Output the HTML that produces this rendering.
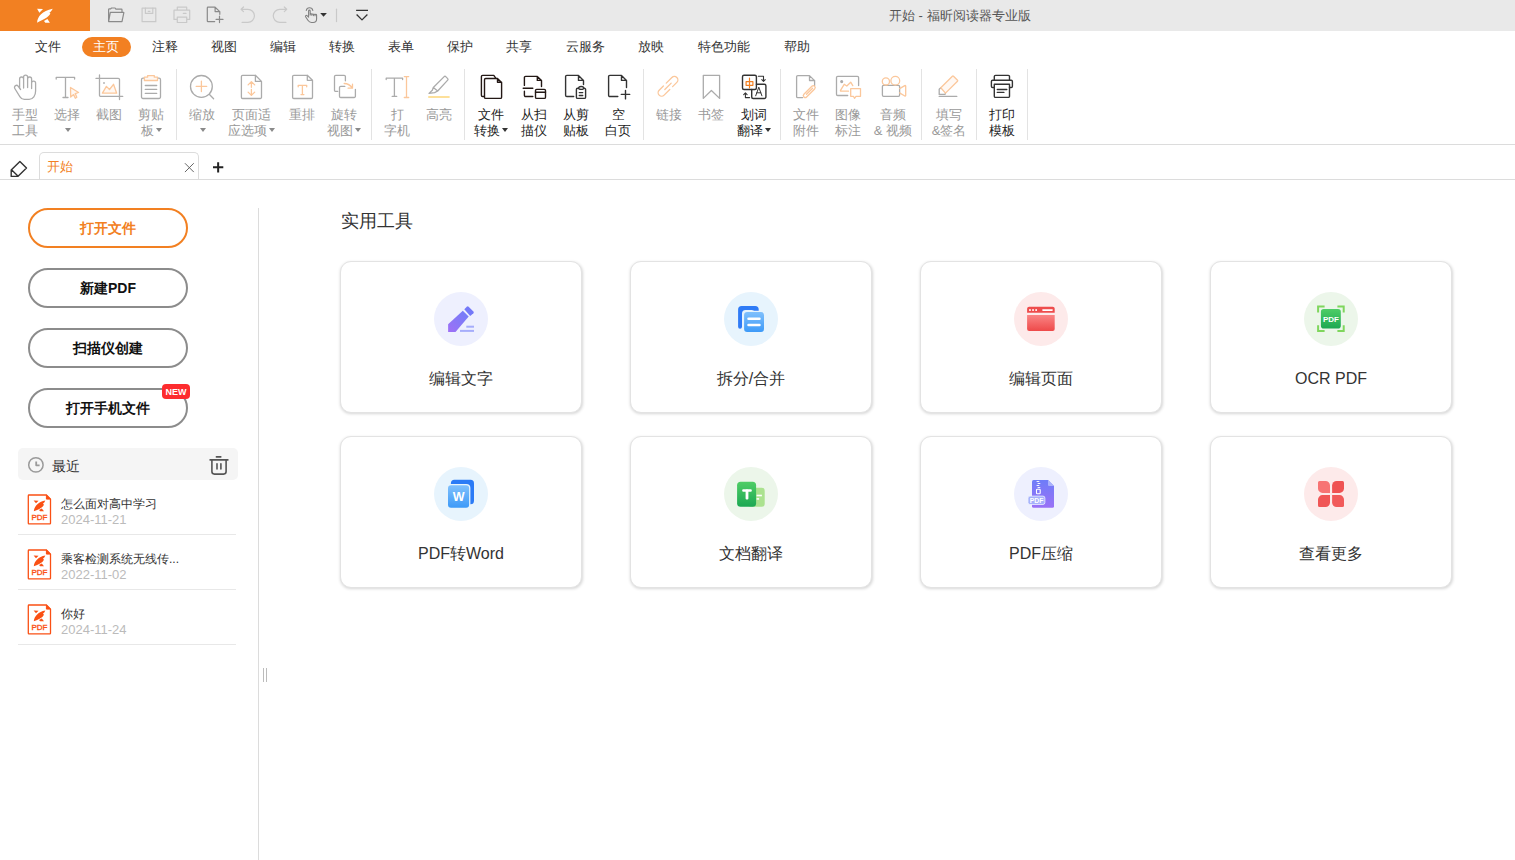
<!DOCTYPE html>
<html><head><meta charset="utf-8">
<style>
*{margin:0;padding:0;box-sizing:border-box}
html,body{width:1515px;height:860px;overflow:hidden;background:#fff;font-family:"Liberation Sans",sans-serif;color:#333}
.a{position:absolute}
#title{left:0;top:0;width:1515px;height:31px;background:#e9e9e9}
#logo{left:0;top:0;width:90px;height:31px;background:#f28022}
.ttl{left:889px;top:7px;font-size:13px;color:#555;white-space:nowrap;line-height:18px}
.menu{top:38px;font-size:13px;color:#333;line-height:18px;white-space:nowrap}
.pill{left:81.5px;top:37px;width:49px;height:20px;border-radius:10px;background:#f28022}
.tb{top:106.6px;font-size:13px;line-height:16px;text-align:center;white-space:nowrap;color:#999;width:80px;margin-left:-40px}
.tb.on{color:#222}
.sep{top:69px;width:1px;height:71px;background:#e3e3e3}
svg{position:absolute;overflow:visible}
.btn{left:28px;width:160px;height:40px;border:2px solid #8c8c8c;border-radius:20px;font-size:14px;font-weight:bold;color:#111;text-align:center;line-height:36px}
.badge{left:162px;top:384px;width:28px;height:15px;background:#fd2c2e;border-radius:4px;color:#fff;font-size:9px;font-weight:bold;line-height:16px;text-align:center}
.fname{left:61px;font-size:12px;line-height:16px;color:#333;white-space:nowrap}
.fdate{left:61px;font-size:13px;line-height:16px;color:#bbb;white-space:nowrap}
.card{width:242px;height:152px;border-radius:11px;background:#fff;border:1px solid #e3e3e3;box-shadow:.5px 1px 3px rgba(0,0,0,.16)}
.circ{width:54px;height:54px;border-radius:50%}
.clabel{width:242px;text-align:center;font-size:16px;line-height:20px;color:#333;white-space:nowrap}
.dd{display:inline-block;width:0;height:0;border-left:3.5px solid transparent;border-right:3.5px solid transparent;border-top:4px solid #8a8a8a;vertical-align:middle;margin-left:2px;margin-top:-2px}
.on .dd{border-top-color:#333}
</style></head><body>
<!-- title bar -->
<div id="title" class="a"></div>
<div id="logo" class="a"></div>

<svg class="a" style="left:0;top:0" width="400" height="31" viewBox="0 0 400 31" fill="none" stroke-linecap="round" stroke-linejoin="round">
 <path fill="#fff" d="M37.1 8.8L43 9.1L39.4 12.7ZM37.1 22.7C37.6 16.5 42 11 52.7 8.8C51.8 10.6 50.8 11.9 49.4 12.7L50.4 13.6C48.2 17.8 43 19.9 37.1 22.7ZM44 20.9L47.4 19L49.9 22.7L45.3 22.7Z"/>
 <g stroke="#8a8a8a" stroke-width="1.2">
  <path d="M108.6 21.6V9.6a.8.8 0 0 1 .8-.8h1.3l.8-.8h3.6l.8 1.1h5.5a.6.6 0 0 1 .6.6V12.2M110.3 12.3H123.4a.4.4 0 0 1 .4.5L122 21.6H108.6Z"/>
  <path d="M214.7 21.6H208a.7.7 0 0 1-.7-.7V7.9a.7.7 0 0 1 .7-.7h7.1L219.8 11.6V14.3M215.1 7.3V11.6H219.8M216.1 19.4H223M219.5 16.1V22.6"/>
 </g>
 <g stroke="#c9c9c9" stroke-width="1.2">
  <rect x="142.1" y="8.1" width="13.7" height="13.6"/><path d="M145.4 8.1V13.4H152.8V8.1M148.2 11.3H150"/>
  <path d="M177.3 10.2V7.2H186.7V10.2M177.3 19.4H174V10.2H189.7V19.4H186.7M177.3 17.1H186.7V22.5H177.3ZM183.3 13.4H186"/>
  <path d="M243.5 7L241.1 9.3L243.5 11.7M241.3 9.3H247.9A6.55 6.55 0 0 1 247.9 22.4H242.1"/>
  <path d="M284.3 7L286.7 9.3L284.3 11.7M286.5 9.3H279.8A6.55 6.55 0 0 0 279.8 22.4H285.9"/>
  <path d="M336.5 9.2V21.6"/>
 </g>
 <g stroke="#808080" stroke-width="1.1">
  <path d="M306.3 10.5A3.3 3.3 0 0 1 312.8 10.5"/>
  <path d="M308.6 16.2V10.9a.8.8 0 0 1 1.6 0V15M310.2 14.5a.8.8 0 0 1 1.6 0V15.3M311.8 14.8a.8.8 0 0 1 1.6 0V15.6M313.4 15a.8.8 0 0 1 1.6 0V15.8M315 15.2a.8.8 0 0 1 1.6 0V19c0 2-1.5 3.5-3.5 3.5H311.5c-1.7 0-2.6-.7-3.6-2.2L305.6 16.8a.9.9 0 0 1 1.4-1.1L308.6 17.2"/>
 </g>
 <path d="M320.2 13H326.9L323.55 16.8Z" fill="#333"/>
 <path d="M356.1 10.4H368M356.6 14.5L362 19.9L367.4 14.5" stroke="#333" stroke-width="1.3" stroke-linecap="butt"/>
</svg>
<div class="a ttl">开始 - 福昕阅读器专业版</div>

<!-- menu -->
<div class="a pill"></div>
<div class="a menu" style="left:35px">文件</div>
<div class="a menu" style="left:93px;color:#fff">主页</div>
<div class="a menu" style="left:152px">注释</div>
<div class="a menu" style="left:211px">视图</div>
<div class="a menu" style="left:270px">编辑</div>
<div class="a menu" style="left:329px">转换</div>
<div class="a menu" style="left:388px">表单</div>
<div class="a menu" style="left:447px">保护</div>
<div class="a menu" style="left:506px">共享</div>
<div class="a menu" style="left:566px">云服务</div>
<div class="a menu" style="left:638px">放映</div>
<div class="a menu" style="left:698px">特色功能</div>
<div class="a menu" style="left:784px">帮助</div>

<!-- toolbar labels -->
<div class="a tb" style="left:25px">手型<br>工具</div>
<div class="a tb" style="left:67px">选择<br><i class="dd"></i></div>
<div class="a tb" style="left:109px">截图</div>
<div class="a tb" style="left:151px">剪贴<br>板<i class="dd"></i></div>
<div class="a sep" style="left:176px"></div>
<div class="a tb" style="left:202px">缩放<br><i class="dd"></i></div>
<div class="a tb" style="left:251px">页面适<br>应选项<i class="dd"></i></div>
<div class="a tb" style="left:302px">重排</div>
<div class="a tb" style="left:344px">旋转<br>视图<i class="dd"></i></div>
<div class="a sep" style="left:371px"></div>
<div class="a tb" style="left:397px">打<br>字机</div>
<div class="a tb" style="left:439px">高亮</div>
<div class="a sep" style="left:464px"></div>
<div class="a tb on" style="left:491px">文件<br>转换<i class="dd"></i></div>
<div class="a tb on" style="left:534px">从扫<br>描仪</div>
<div class="a tb on" style="left:576px">从剪<br>贴板</div>
<div class="a tb on" style="left:618px">空<br>白页</div>
<div class="a sep" style="left:643px"></div>
<div class="a tb" style="left:669px">链接</div>
<div class="a tb" style="left:711px">书签</div>
<div class="a tb on" style="left:754px">划词<br>翻译<i class="dd"></i></div>
<div class="a sep" style="left:780px"></div>
<div class="a tb" style="left:806px">文件<br>附件</div>
<div class="a tb" style="left:848px">图像<br>标注</div>
<div class="a tb" style="left:893px">音频<br>&amp; 视频</div>
<div class="a sep" style="left:921px"></div>
<div class="a tb" style="left:949px">填写<br>&amp;签名</div>
<div class="a sep" style="left:976px"></div>
<div class="a tb on" style="left:1002px">打印<br>模板</div>
<div class="a sep" style="left:1027px"></div>


<!-- toolbar icons -->
<svg class="a" style="left:0;top:0" width="1515" height="145" viewBox="0 0 1515 145" fill="none" stroke-linecap="round" stroke-linejoin="round">
<g stroke="#ababab" stroke-width="1.3">
 <!-- hand -->
 <path d="M19.6 88.5V79a2 2 0 0 1 4 0v9M23.6 87.5V77.1a2 2 0 0 1 4 0v10.4M27.6 87.5V79a2 2 0 0 1 4 0v9.5M31.6 88.5V83.2a2 2 0 0 1 4 0V91c0 4.5-2.5 8.3-6.5 8.3h-4.8c-2 0-3.2-.8-4.3-2.5l-5.2-8.3c-.6-1-.3-2.3.7-2.9.9-.5 2-.3 2.6.5l2.5 3.4"/>
 <!-- select T -->
 <path d="M56.2 79V77.4H74.6V79M65.5 77.4V97.5M63 97.5H68" />
 <!-- crop -->
 <path d="M96 78.4H118.3a1.2 1.2 0 0 1 1.2 1.2V99.6M99.5 75V95.2a1.2 1.2 0 0 0 1.2 1.2H122.7"/>
 <!-- clipboard -->
 <path d="M144.4 78.2H143a1.5 1.5 0 0 0-1.5 1.5V97a1.5 1.5 0 0 0 1.5 1.5h16a1.5 1.5 0 0 0 1.5-1.5V79.7a1.5 1.5 0 0 0-1.5-1.5h-1.4M145.3 85.5H156.7M145.3 89.4H156.7M145.3 93.4H156.7"/>
 <!-- zoom -->
 <circle cx="201.4" cy="86.4" r="10.9"/><path d="M209.5 94.5L213.6 98.7"/>
 <!-- page fit -->
 <path d="M255.4 75.3H242.6a1.2 1.2 0 0 0-1.2 1.2v20.8a1.2 1.2 0 0 0 1.2 1.2h17.7a1.2 1.2 0 0 0 1.2-1.2V81.4L255.4 75.3V81.4H261.5"/>
 <!-- reflow -->
 <path d="M307.3 75.3H293.8a1.2 1.2 0 0 0-1.2 1.2v20.8a1.2 1.2 0 0 0 1.2 1.2h17.5a1.2 1.2 0 0 0 1.2-1.2V80.3L307.3 75.3V80.3H312.5"/>
 <!-- rotate -->
 <path d="M337.7 91.4H335.7a1.2 1.2 0 0 1-1.2-1.2V76.5a1.2 1.2 0 0 1 1.2-1.2h8.5a1.2 1.2 0 0 1 1.2 1.2v4.3M344.8 86.4H340.7a1.2 1.2 0 0 0-1.2 1.2v8.7a1.2 1.2 0 0 0 1.2 1.2h13.5a1.2 1.2 0 0 0 1.2-1.2V89.3"/>
 <!-- typewriter T -->
 <path d="M386.2 79.5V78.2H402.6V79.5M394.4 78.2V96.4M392.2 96.4H396.7"/>
 <!-- highlighter -->
 <path d="M433.3 87.5L444.2 76.6a1.1 1.1 0 0 1 1.5 0L447.7 78.6a1.1 1.1 0 0 1 0 1.5L437.7 91ZM433.3 87.5L432.3 90.3L429 93.4L434.6 92.6L437.7 91"/>
 <!-- bookmark -->
 <path d="M703.3 75.3H719.6V98.4L711.4 90.5L703.3 98.4Z"/>
 <!-- file attach -->
 <path d="M802.6 97.6H797.8a1.2 1.2 0 0 1-1.2-1.2V76.8a1.2 1.2 0 0 1 1.2-1.2h11.7L814.6 80.6V85.6M809.5 75.6V80.5H814.6"/>
 <!-- image annotate -->
 <path d="M847.7 95.5H837.7a1.2 1.2 0 0 1-1.2-1.2V77.6a1.2 1.2 0 0 1 1.2-1.2h19.7a1.2 1.2 0 0 1 1.2 1.2v8"/>
 <circle cx="841.7" cy="81.6" r=".9" fill="#ababab"/><rect x="103.2" y="82.2" width="1.6" height="1.6" fill="#ababab" stroke="none"/>
 <!-- video body -->
 <rect x="882.4" y="85.3" width="17.2" height="11" rx="1.2"/>
 <!-- fill sign -->
 <path d="M940.8 87.8L939.2 89.3V94.4H945.1L945.5 93.1M939.2 96.4H956.8"/>
</g>
<g stroke="#fbc79b" stroke-width="1.3">
 <!-- select cursor -->
 <path d="M70.5 87.5L78.6 92.5L75.2 93.6L76.8 97.2L75.3 98.2L73.6 94.6L70.7 97Z" fill="#fff8f3"/>
 <!-- crop mountain -->
 <path d="M102.4 93.2L106.4 86.4L109.5 89.5L113.5 84.3L116.7 93.2Z" fill="#fff8f3"/>
 <!-- clipboard clip -->
 <path d="M144.4 80.5V77.2H147.6V75.6H154.3V77.2H157.5V80.5Z" fill="#fff8f3"/>
 <!-- zoom plus -->
 <path d="M196.2 86.4H206.7M201.4 81.2V91.5"/>
 <!-- page arrows -->
 <path d="M251.4 81.6V87.3M251.4 89.4V95.4M248.1 84.9L251.4 81.6L254.7 84.9M248.1 92.1L251.4 95.4L254.7 92.1"/>
 <!-- reflow T -->
 <path d="M298.2 86.8V85.3H306.7V86.8M302.4 85.3V94.6M301 94.6H303.9"/>
 <!-- rotate arrow -->
 <path d="M344.2 83.5C347.5 83.6 350.5 85.3 352.4 88.1M352.5 84.2V88.2H348.1"/>
 <!-- typewriter I -->
 <path d="M406.5 76.6V97.5M404.3 76.6H408.7M404.3 97.5H408.7"/>
 <!-- link -->
 <g transform="rotate(-45 668 86.3)"><path d="M665 82.8H659a3.5 3.5 0 0 0 0 7H667M671 89.8H677a3.5 3.5 0 0 0 0-7H669M663.5 86.3H672.5"/></g>
 <!-- paperclip -->
 <path d="M814.4 89.2L806.6 97a1.9 1.9 0 0 1-2.7-2.7l8-8a1.9 1.9 0 0 1 2.7 2.7M812.6 88.2L806.5 94.3"/>
 <!-- image mountain + bubble -->
 <path d="M848.5 91.2H841a.6.6 0 0 1-.5-.9L844.2 84.3L846.8 86L850.7 82.2L852.8 85.6M850.7 88.6H860.5V96.3H856L854.5 98.3L853.4 96.3H850.7Z"/>
 <!-- video circles + lens -->
 <circle cx="885.9" cy="81.4" r="3.6"/><circle cx="895.3" cy="80.7" r="4.4"/>
 <path d="M899.6 88.6L904.8 85.6a.6.6 0 0 1 .9.5V95.5a.6.6 0 0 1-.9.5L899.6 92.9"/>
 <!-- fill sign pencil -->
 <path d="M940.8 87.8L952.4 76.2a.8.8 0 0 1 1.1 0l4 4a.8.8 0 0 1 0 1.1L945.5 93.1Z" fill="#fff8f3"/>
</g>
<path d="M429 96.9H448.9" stroke="#fde09a" stroke-width="2"/>
<g stroke="#231815" stroke-width="1.4">
 <!-- file convert -->
 <path d="M484.3 96.5H482.6a1.2 1.2 0 0 1-1.2-1.2V76.6a1.2 1.2 0 0 1 1.2-1.2h11.2L495.9 78.3"/>
 <path d="M497.5 78.5H485.7a1.2 1.2 0 0 0-1.2 1.2v17.5a1.2 1.2 0 0 0 1.2 1.2h14.7a1.2 1.2 0 0 0 1.2-1.2V82.4L497.5 78.5V82.3H501.6"/>
 <!-- scanner -->
 <path d="M524.4 85.4V77.6a1.2 1.2 0 0 1 1.2-1.2h11.7L541.5 80.6V86.5M537.3 76.5V80.4H541.5M523.2 88.3H532.8M524.4 91.2V95.3a1.2 1.2 0 0 0 1.2 1.2h7.2"/>
 <rect x="535.5" y="89.4" width="10" height="9" rx="1.2"/><path d="M535.5 92.3H545.5"/>
</g>
<g stroke="#333" stroke-width="1.4">
 <!-- from clipboard -->
 <path d="M573.7 96.5H566.8a1.2 1.2 0 0 1-1.2-1.2V76.6a1.2 1.2 0 0 1 1.2-1.2h11.7L583.5 80.4V84.6M578.5 75.4V80.4H583.5"/>
 <path d="M578.5 88.3H577.6a1.2 1.2 0 0 0-1.2 1.2v7.7a1.2 1.2 0 0 0 1.2 1.2h6.8a1.2 1.2 0 0 0 1.2-1.2V89.5a1.2 1.2 0 0 0-1.2-1.2h-.6M578.6 88.3a2.6 1.8 0 0 1 5.2 0a2.6 1.1 0 0 1-5.2 0M579.3 92.6H582.7M579.3 95.5H582.7"/>
 <!-- blank page -->
 <path d="M617.8 96.5H609.8a1.2 1.2 0 0 1-1.2-1.2V76.6a1.2 1.2 0 0 1 1.2-1.2h11.7L626.5 80.4V87.5M621.5 75.4V80.4H626.5M621.3 94.4H629.7M625.5 90.4V98.9"/>
 <!-- translate -->
 <rect x="742.5" y="75.3" width="13.9" height="14.2" rx="1.5"/>
 <path d="M756.4 84.3H764.4a1.5 1.5 0 0 1 1.5 1.5v11.2a1.5 1.5 0 0 1-1.5 1.5H753.2a1.5 1.5 0 0 1-1.5-1.5V89.5"/>
 <path d="M758.3 76.3H763.5V81.1M761.8 79.6L763.5 81.3L765.2 79.6M749.6 97.6H745.4V92.9M743.7 94.6L745.4 92.9L747.1 94.6" stroke-width="1.1"/>
 <path d="M755.7 95.8L758.8 87.2L761.9 95.8M756.8 92.8H760.8" stroke-width="1"/>
 <!-- print template -->
 <path d="M994.3 80.2V76.6a1.2 1.2 0 0 1 1.2-1.2h12.8a1.2 1.2 0 0 1 1.2 1.2v3.6"/>
 <path d="M994.3 87.5H992.6a1.2 1.2 0 0 1-1.2-1.2V81.4a1.2 1.2 0 0 1 1.2-1.2h18.6a1.2 1.2 0 0 1 1.2 1.2v4.9a1.2 1.2 0 0 1-1.2 1.2h-1.7"/>
 <path d="M994.3 84.2H1009.5V96.2a1.2 1.2 0 0 1-1.2 1.2H995.5a1.2 1.2 0 0 1-1.2-1.2Z"/>
 <path d="M997.3 89.5H1006.8M997.3 92.4H1003.9"/>
</g>
<path d="M746.1 81.7H752.9V85.3H746.1ZM749.5 78.2V88" stroke="#f28022" stroke-width="1.2"/>
</svg>

<div class="a" style="left:0;top:144px;width:1515px;height:1px;background:#dcdcdc"></div>

<!-- tab bar -->
<div class="a" style="left:39px;top:152px;width:160px;height:28px;border:1px solid #dcdcdc;border-bottom:none;border-radius:5px 5px 0 0;background:#fff"></div>
<div class="a" style="left:47px;top:158px;font-size:13px;color:#f28022;line-height:18px">开始</div>
<div class="a" style="left:0;top:179px;width:1515px;height:1px;background:#dcdcdc"></div>
<div class="a" style="left:199px;top:179px;width:0;height:0"></div>


<!-- tab bar icons -->
<svg class="a" style="left:0;top:145px" width="240" height="35" viewBox="0 145 240 35" fill="none" stroke-linecap="round" stroke-linejoin="round">
 <path d="M19.9 161.4L26.5 168L17.8 176.4H11.2V170.1ZM11.5 169.8L17.9 176.1" stroke="#333" stroke-width="1.4"/>
 <path d="M185.2 163.5L193.5 171.8M193.5 163.5L185.2 171.8" stroke="#666" stroke-width="1"/>
 <path d="M213 167.3H223.3M218.15 162.2V172.4" stroke="#222" stroke-width="2" stroke-linecap="butt"/>
</svg>

<!-- left panel -->
<div class="a btn" style="top:208px;border-color:#f28022;color:#f28022">打开文件</div>
<div class="a btn" style="top:268px">新建PDF</div>
<div class="a btn" style="top:328px">扫描仪创建</div>
<div class="a btn" style="top:388px">打开手机文件</div>
<div class="a badge">NEW</div>

<div class="a" style="left:18px;top:448px;width:220px;height:32px;background:#f5f5f5;border-radius:5px"></div>
<div class="a" style="left:52px;top:456.5px;font-size:14px;line-height:18px;color:#333">最近</div>
<svg class="a" style="left:0;top:440px" width="250" height="200" viewBox="0 440 250 200" fill="none" stroke-linecap="round" stroke-linejoin="round">
 <circle cx="35.9" cy="464.9" r="7.2" stroke="#9a9a9a" stroke-width="1.5"/>
 <path d="M36.2 461.4V465.3H39.6" stroke="#9a9a9a" stroke-width="1.8" stroke-linecap="butt"/>
 <path d="M210.1 459.9H227.9M216.4 456.9H220.8M211.9 459.9V471.6a2.5 2.5 0 0 0 2.5 2.5H223.6a2.5 2.5 0 0 0 2.5-2.5V459.9M217 463.8V468.9M220.9 463.8V468.9" stroke="#555" stroke-width="1.6"/>
</svg>
<svg class="a" style="left:26px;top:493.3px" width="28" height="33" viewBox="26 492.3 28 33" fill="none">
 <path d="M46.4 494.3H29a.7.7 0 0 0-.7.7V522.5a.7.7 0 0 0 .7.7H49.8a.7.7 0 0 0 .7-.7V498.4Z" stroke="#fa5014" stroke-width="1.3" stroke-linejoin="round"/>
 <path d="M46.4 494.3V498.4H50.5Z" fill="#fa5014" stroke="#fa5014" stroke-width="1" stroke-linejoin="round"/>
 <path fill="#fa5014" d="M33.6 499.8L38.6 500L36 502.6ZM33.8 510.6C34.3 505.5 38.5 501.2 45.3 499.9C44.7 501.4 44 502.4 43 503.1L44 504C42.3 507.3 38.5 508.8 33.8 510.6ZM39 509.4L41.8 507.9L44 510.6L40.2 510.6Z"/>
 <text x="39.4" y="519.6" font-family="Liberation Sans" font-size="8" fill="#fa5014" stroke="#fa5014" stroke-width=".35" text-anchor="middle">PDF</text>
</svg><svg class="a" style="left:26px;top:548.3px" width="28" height="33" viewBox="26 492.3 28 33" fill="none">
 <path d="M46.4 494.3H29a.7.7 0 0 0-.7.7V522.5a.7.7 0 0 0 .7.7H49.8a.7.7 0 0 0 .7-.7V498.4Z" stroke="#fa5014" stroke-width="1.3" stroke-linejoin="round"/>
 <path d="M46.4 494.3V498.4H50.5Z" fill="#fa5014" stroke="#fa5014" stroke-width="1" stroke-linejoin="round"/>
 <path fill="#fa5014" d="M33.6 499.8L38.6 500L36 502.6ZM33.8 510.6C34.3 505.5 38.5 501.2 45.3 499.9C44.7 501.4 44 502.4 43 503.1L44 504C42.3 507.3 38.5 508.8 33.8 510.6ZM39 509.4L41.8 507.9L44 510.6L40.2 510.6Z"/>
 <text x="39.4" y="519.6" font-family="Liberation Sans" font-size="8" fill="#fa5014" stroke="#fa5014" stroke-width=".35" text-anchor="middle">PDF</text>
</svg><svg class="a" style="left:26px;top:603.3px" width="28" height="33" viewBox="26 492.3 28 33" fill="none">
 <path d="M46.4 494.3H29a.7.7 0 0 0-.7.7V522.5a.7.7 0 0 0 .7.7H49.8a.7.7 0 0 0 .7-.7V498.4Z" stroke="#fa5014" stroke-width="1.3" stroke-linejoin="round"/>
 <path d="M46.4 494.3V498.4H50.5Z" fill="#fa5014" stroke="#fa5014" stroke-width="1" stroke-linejoin="round"/>
 <path fill="#fa5014" d="M33.6 499.8L38.6 500L36 502.6ZM33.8 510.6C34.3 505.5 38.5 501.2 45.3 499.9C44.7 501.4 44 502.4 43 503.1L44 504C42.3 507.3 38.5 508.8 33.8 510.6ZM39 509.4L41.8 507.9L44 510.6L40.2 510.6Z"/>
 <text x="39.4" y="519.6" font-family="Liberation Sans" font-size="8" fill="#fa5014" stroke="#fa5014" stroke-width=".35" text-anchor="middle">PDF</text>
</svg><div class="a fname" style="top:496px">怎么面对高中学习</div><div class="a fdate" style="top:512px">2024-11-21</div>
<div class="a" style="left:18px;top:534px;width:218px;height:1px;background:#e8e8e8"></div>
<div class="a fname" style="top:551px">乘客检测系统无线传...</div><div class="a fdate" style="top:567px">2022-11-02</div>
<div class="a" style="left:18px;top:589px;width:218px;height:1px;background:#e8e8e8"></div>
<div class="a fname" style="top:606px">你好</div><div class="a fdate" style="top:622px">2024-11-24</div>
<div class="a" style="left:18px;top:644px;width:218px;height:1px;background:#e8e8e8"></div>

<!-- splitter handle -->
<div class="a" style="left:263px;top:668px;width:1px;height:14px;background:#bcbcbc"></div>
<div class="a" style="left:266px;top:668px;width:1px;height:14px;background:#bcbcbc"></div>

<!-- right content -->
<div class="a" style="left:341px;top:210px;font-size:18px;line-height:22px;color:#333">实用工具</div>
<div class="a card" style="left:340px;top:261px"></div>
<div class="a circ" style="left:434px;top:292px;background:#eef0fe"></div>
<div class="a clabel" style="left:340px;top:369px">编辑文字</div>
<div class="a card" style="left:630px;top:261px"></div>
<div class="a circ" style="left:724px;top:292px;background:#e7f4fd"></div>
<div class="a clabel" style="left:630px;top:369px">拆分/合并</div>
<div class="a card" style="left:920px;top:261px"></div>
<div class="a circ" style="left:1014px;top:292px;background:#fdeaea"></div>
<div class="a clabel" style="left:920px;top:369px">编辑页面</div>
<div class="a card" style="left:1210px;top:261px"></div>
<div class="a circ" style="left:1304px;top:292px;background:#ecf6ea"></div>
<div class="a clabel" style="left:1210px;top:369px">OCR PDF</div>
<div class="a card" style="left:340px;top:436px"></div>
<div class="a circ" style="left:434px;top:467px;background:#e7f4fd"></div>
<div class="a clabel" style="left:340px;top:544px">PDF转Word</div>
<div class="a card" style="left:630px;top:436px"></div>
<div class="a circ" style="left:724px;top:467px;background:#ecf6ea"></div>
<div class="a clabel" style="left:630px;top:544px">文档翻译</div>
<div class="a card" style="left:920px;top:436px"></div>
<div class="a circ" style="left:1014px;top:467px;background:#eef0fe"></div>
<div class="a clabel" style="left:920px;top:544px">PDF压缩</div>
<div class="a card" style="left:1210px;top:436px"></div>
<div class="a circ" style="left:1304px;top:467px;background:#fdeaea"></div>
<div class="a clabel" style="left:1210px;top:544px">查看更多</div>

<svg class="a" style="left:0;top:0" width="1515" height="600" viewBox="0 0 1515 600">
<defs>
 <linearGradient id="gp" x1="1" y1="0" x2="0" y2="1"><stop offset="0" stop-color="#6f7ff8"/><stop offset="1" stop-color="#a070f6"/></linearGradient>
 <linearGradient id="gb" x1="0" y1="0" x2="0" y2="1"><stop offset="0" stop-color="#80c0fc"/><stop offset="1" stop-color="#3d9af8"/></linearGradient>
 <linearGradient id="gr" x1="0" y1="0" x2="0" y2="1"><stop offset="0" stop-color="#fa8585"/><stop offset="1" stop-color="#ee4a4a"/></linearGradient>
 <linearGradient id="gg" x1="0" y1="0" x2="0" y2="1"><stop offset="0" stop-color="#4fcd66"/><stop offset="1" stop-color="#1ca853"/></linearGradient>
 <linearGradient id="gz" x1="0" y1="0" x2="0" y2="1"><stop offset="0" stop-color="#6e7df8"/><stop offset="1" stop-color="#9a71f6"/></linearGradient>
</defs>
<!-- edit text -->
<path d="M448.1 332V324.3L462.8 310.7L468.7 316.6L455.5 332Z" fill="url(#gp)"/>
<path d="M464.3 309.2L466.8 306.7a1.3 1.3 0 0 1 1.8 0L473.4 311.5a1.3 1.3 0 0 1 0 1.8L470.2 315.9Z" fill="#7479f8"/>
<rect x="466.3" y="325.7" width="7.7" height="2" fill="#a6adfb"/>
<rect x="460" y="329.9" width="14" height="2" fill="#a6adfb"/>
<!-- split merge -->
<path d="M738.1 326.7V309.6a3.5 3.5 0 0 1 3.5-3.5H755.2a3.5 3.5 0 0 1 3.5 3.5V312H754.7a3.5 3.5 0 0 0-3.5-2H745.5a3.5 3.5 0 0 0-3.5 3.5V326.7a1.95 1.95 0 0 1-3.9 0Z" fill="#2f7bf6"/>
<rect x="742.7" y="310.7" width="22.7" height="22.7" rx="4" fill="#e7f4fd"/>
<rect x="744.1" y="312.1" width="19.9" height="19.9" rx="3" fill="url(#gb)"/>
<path d="M748.5 318.7H759.5M748.5 325H759.5" stroke="#fff" stroke-width="2.5" stroke-linecap="round"/>
<!-- edit page -->
<path d="M1029.1 306.8H1052.7a2 2 0 0 1 2 2V312.8H1027.1V308.8a2 2 0 0 1 2-2Z" fill="#ee4c4c"/>
<rect x="1029.1" y="309.2" width="1.7" height="1.7" fill="#fff"/><rect x="1032.2" y="309.2" width="1.7" height="1.7" fill="#fff"/><rect x="1035.3" y="309.2" width="1.7" height="1.7" fill="#fff"/>
<rect x="1042.1" y="309.2" width="10.8" height="1.7" rx=".8" fill="#fff"/>
<path d="M1027.1 314.9H1054.7V328.9a2 2 0 0 1-2 2H1029.1a2 2 0 0 1-2-2Z" fill="url(#gr)"/>
<!-- ocr -->
<path d="M1318.1 312.6V306.4H1324.6M1337.4 306.4H1343.7V312.6M1318.1 325.2V331H1324.6M1337.4 331H1343.7V325.2" fill="none" stroke="#7fd65d" stroke-width="2"/>
<rect x="1320.9" y="308.9" width="19.9" height="19.6" rx="2.8" fill="url(#gg)"/>
<text x="1330.9" y="321.9" font-family="Liberation Sans" font-size="8" font-weight="bold" fill="#fff" text-anchor="middle">PDF</text>
<!-- word -->
<rect x="450.9" y="479.7" width="23.1" height="24.5" rx="3.5" fill="#2b7bf6"/>
<rect x="446.7" y="483.9" width="23.7" height="25.1" rx="4" fill="#e7f4fd"/>
<rect x="448" y="485.2" width="21.1" height="22.5" rx="3" fill="url(#gb)"/>
<text x="458.6" y="501.2" font-family="Liberation Sans" font-size="12.5" font-weight="bold" fill="#fff" text-anchor="middle">W</text>
<!-- translate -->
<rect x="748" y="487.8" width="16.7" height="19" rx="3" fill="#abe28f"/>
<rect x="737.1" y="481.8" width="19" height="25" rx="3.5" fill="url(#gg)"/>
<rect x="742.2" y="489.2" width="9.6" height="2.6" rx="1" fill="#fff"/>
<rect x="745.6" y="489.5" width="2.8" height="10.1" rx="1" fill="#fff"/>
<rect x="756.6" y="494.7" width="5.3" height="1.6" fill="#fff"/>
<rect x="756.6" y="498.1" width="2.5" height="1.6" fill="#fff"/>
<!-- compress -->
<path d="M1033.5 480H1048L1054 486V506.2a1.5 1.5 0 0 1-1.5 1.5H1033.5a1.5 1.5 0 0 1-1.5-1.5V481.5a1.5 1.5 0 0 1 1.5-1.5Z" fill="url(#gz)"/>
<path d="M1048 480L1054 486H1049a1 1 0 0 1-1-1Z" fill="#aab2fb"/>
<path d="M1036.6 481.5H1039.3M1037.6 483.5H1040.3M1036.6 485.5H1039.3M1037.6 487.5H1040.3" stroke="#fff" stroke-width="1.1" opacity=".9"/>
<rect x="1036.5" y="489.3" width="3.7" height="4.4" rx=".8" fill="none" stroke="#fff" stroke-width="1.1"/>
<rect x="1028" y="496.1" width="16.9" height="8.4" rx="2" fill="#a6b1fb" stroke="#eef0fe" stroke-width=".8"/>
<text x="1036.5" y="503.1" font-family="Liberation Sans" font-size="6.8" font-weight="bold" fill="#fff" text-anchor="middle">PDF</text>
<!-- more -->
<path d="M1319.5 481H1325.5a4.5 4.5 0 0 1 4.5 4.5V492.9H1322.5a4.5 4.5 0 0 1-4.5-4.5V482.5a1.5 1.5 0 0 1 1.5-1.5Z" fill="#f77474"/>
<path d="M1336.6 481H1342.5a1.5 1.5 0 0 1 1.5 1.5V488.4a4.5 4.5 0 0 1-4.5 4.5H1332.1V485.5a4.5 4.5 0 0 1 4.5-4.5Z" fill="#ef5252"/>
<path d="M1322.5 495.1H1330V502.5a4.5 4.5 0 0 1-4.5 4.5H1319.5a1.5 1.5 0 0 1-1.5-1.5V499.6a4.5 4.5 0 0 1 4.5-4.5Z" fill="#f05656"/>
<path d="M1332.1 495.1H1339.5a4.5 4.5 0 0 1 4.5 4.5V505.5a1.5 1.5 0 0 1-1.5 1.5H1336.6a4.5 4.5 0 0 1-4.5-4.5Z" fill="#f15a5a"/>
</svg>

<div class="a" style="left:258px;top:208px;width:1px;height:652px;background:#dcdcdc"></div>

</body></html>
